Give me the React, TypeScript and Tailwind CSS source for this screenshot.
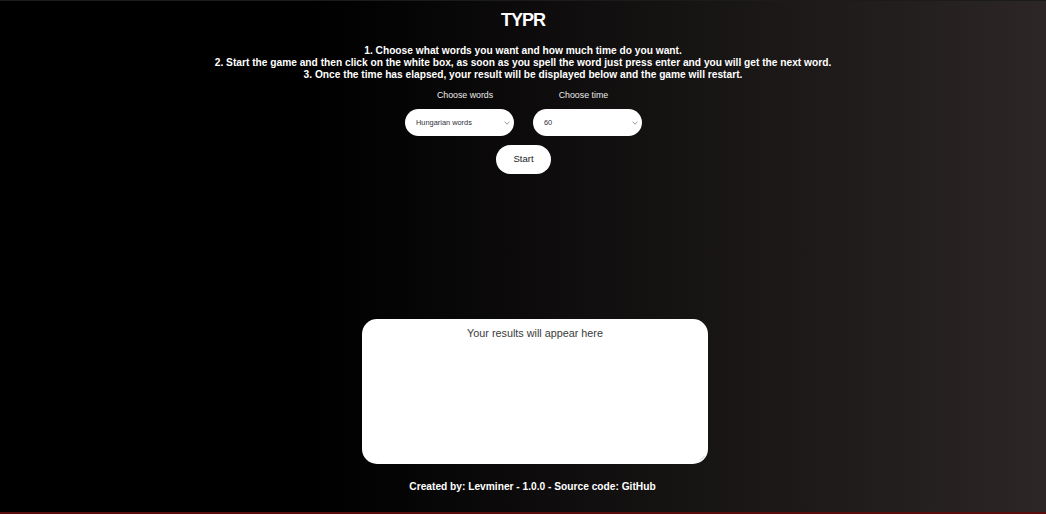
import React from "react";

const font = { fontFamily: '"Liberation Sans", Arial, sans-serif' };

function Chevron() {
  return (
    <svg width="6" height="4" viewBox="0 0 6 4" className="absolute right-[4px] top-[12px]">
      <path d="M0.5 0.8 L3 3.2 L5.5 0.8" fill="none" stroke="#8a8a8a" strokeWidth="0.9" />
    </svg>
  );
}

function FakeSelect({ value }: { value: string }) {
  return (
    <div className="relative w-[109px] h-[27.4px] rounded-full bg-white flex items-center pl-[11px] text-[7.4px] text-[#2f2f3a] font-medium">
      <span>{value}</span>
      <Chevron />
    </div>
  );
}

export default function App() {
  return (
    <div
      style={font}
      className="h-[514px] w-full box-border flex flex-col items-center border-t border-[#1b1b1b] border-b-2 border-b-[#5a0d0d] bg-[linear-gradient(to_right,#000_30%,#2c2626)] text-white overflow-hidden"
    >
      <h1 className="mt-[9px] text-[18px] leading-[21px] font-bold tracking-[-1px]">TYPR</h1>
      <div className="mt-[14px] text-center text-[10.2px] leading-[12px] font-bold">
        <p>1. Choose what words you want and how much time do you want.</p>
        <p>2. Start the game and then click on the white box, as soon as you spell the word just press enter and you will get the next word.</p>
        <p>3. Once the time has elapsed, your result will be displayed below and the game will restart.</p>
      </div>
      <div className="mt-[8.5px] flex gap-[65.6px] text-[8.8px] leading-[10px] text-[#ececec] pr-[1px]">
        <span>Choose words</span>
        <span>Choose time</span>
      </div>
      <div className="mt-[9px] flex gap-[19px] ml-[1px]">
        <FakeSelect value="Hungarian words" />
        <FakeSelect value="60" />
      </div>
      <button className="mt-[9px] w-[55px] h-[29px] rounded-full bg-white text-[9.5px] text-[#222] ml-[1px]">
        Start
      </button>
      <div className="relative mt-[145px] w-[346px] h-[145px] rounded-[15px] bg-white ml-[24px] pt-[8px] text-center text-[10.8px] leading-[13px] text-[#3a3a3a]">
        <span>Your results will appear here</span>
        <svg width="6" height="6" viewBox="0 0 6 6" className="absolute right-[3px] bottom-[3px]">
          <path d="M5.5 1 L1 5.5 M5.5 3.5 L3.5 5.5" stroke="#b5b5b5" strokeWidth="0.7" />
        </svg>
      </div>
      <div className="mt-[17px] text-[10.2px] leading-[12px] font-bold ml-[19px]">
        Created by: Levminer - 1.0.0 - Source code: GitHub
      </div>
    </div>
  );
}
